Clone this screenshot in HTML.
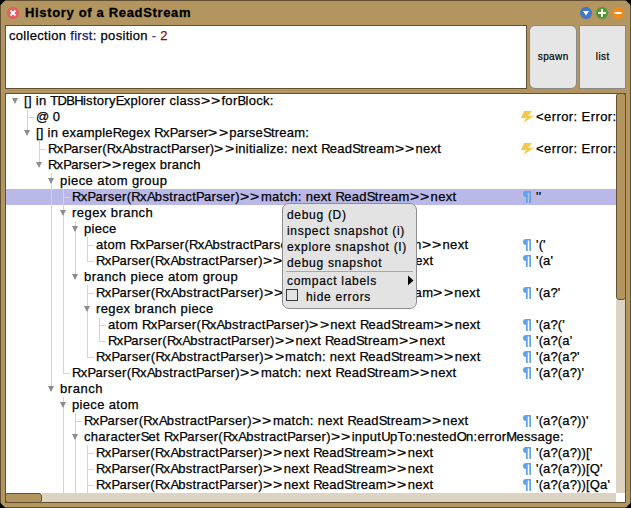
<!DOCTYPE html><html><head><meta charset="utf-8"><style>
*{margin:0;padding:0;box-sizing:border-box}
html,body{width:631px;height:508px;overflow:hidden;background:#000}
body{position:relative;font-family:"Liberation Sans",sans-serif}
.a{position:absolute}
.win{left:0;top:0;width:631px;height:508px;background:#b3955f;border:1px solid #634f31}
.title{left:25px;top:4px;font:bold 13px/18px "Liberation Sans",sans-serif;letter-spacing:0.66px;-webkit-text-stroke:0.3px;color:#000;white-space:pre}
.pane{background:#fff;border:1px solid #634f31}
.btn{background:#e6e6e6;border:1px solid #888}
.btxt{font:10.5px/16px "Liberation Sans",sans-serif;letter-spacing:0.1px;color:#000;text-align:center;width:100%;white-space:pre}
.row{position:absolute;left:0;height:16px;font:13px/16px "Liberation Sans",sans-serif;letter-spacing:0.27px;-webkit-text-stroke:0.25px;white-space:pre;color:#000}
.menu{left:282px;top:203px;width:135px;height:106px;background:#e3e3e3;border:1px solid #8e8e8e;border-radius:7px}
.mi{position:absolute;left:4px;font:12px/16px "Liberation Sans",sans-serif;letter-spacing:0.7px;-webkit-text-stroke:0.2px;white-space:pre;color:#000}
</style></head><body>

<div class="a win"></div>
<svg class="a" style="left:0;top:0" width="631" height="30">
<circle cx="13" cy="13" r="6" fill="#e85b5e"/>
<path d="M10.5 10.5l5 5M15.5 10.5l-5 5" stroke="#fff" stroke-width="1.8"/>
<circle cx="586" cy="13" r="6" fill="#3f78c5"/>
<polygon points="583,11 589,11 586,15.5" fill="#fff"/>
<circle cx="602" cy="13" r="6" fill="#4e9a32"/>
<path d="M598 13h8M602 9v8" stroke="#fff" stroke-width="2"/>
<circle cx="618" cy="13" r="6" fill="#ef8a1a"/>
<path d="M614.5 13h7" stroke="#fff" stroke-width="2"/>
</svg>
<div class="a title">History of a ReadStream</div>
<div class="a pane" style="left:5px;top:25px;width:522px;height:64px"></div>
<div class="a" style="left:9px;top:28px;font:13px/16px 'Liberation Sans',sans-serif;letter-spacing:0.31px;-webkit-text-stroke:0.25px;white-space:pre">collection <span style="color:#10106e">first:</span> position <span style="color:#5a3ab0">-</span> <span style="color:#850c0c">2</span></div>
<div class="a btn" style="left:529px;top:25px;width:48px;height:64px;border-radius:6px"><div class="a btxt" style="top:47px;left:0;top:49px"></div></div>
<div class="a" style="left:529px;top:49px;width:48px;font:10px/16px 'Liberation Sans',sans-serif;letter-spacing:0.4px;text-indent:0.4px;-webkit-text-stroke:0.2px;text-align:center;white-space:pre">spawn</div>
<div class="a btn" style="left:579px;top:25px;width:47px;height:64px"></div>
<div class="a" style="left:579px;top:49px;width:47px;font:10px/16px 'Liberation Sans',sans-serif;letter-spacing:0.4px;text-indent:0.4px;-webkit-text-stroke:0.2px;text-align:center;white-space:pre">list</div>
<div class="a pane" style="left:5px;top:93px;width:621px;height:410px;overflow:hidden">
<div class="a" style="left:-6px;top:-94px;width:631px;height:508px">
<div class="a" style="left:6px;top:189px;width:620px;height:16px;background:#b9b8e6"></div>
<svg class="a" style="left:0;top:0" width="631" height="508"><rect x="27" y="109" width="1" height="24" fill="#d4d4d4"/><rect x="39" y="141" width="1" height="24" fill="#d4d4d4"/><rect x="51" y="173" width="1" height="216" fill="#d4d4d4"/><rect x="63" y="189" width="1" height="184" fill="#d4d4d4"/><rect x="75" y="221" width="1" height="56" fill="#d4d4d4"/><rect x="87" y="237" width="1" height="24" fill="#d4d4d4"/><rect x="87" y="285" width="1" height="72" fill="#d4d4d4"/><rect x="99" y="317" width="1" height="24" fill="#d4d4d4"/><rect x="63" y="397" width="1" height="96" fill="#d4d4d4"/><rect x="75" y="413" width="1" height="80" fill="#d4d4d4"/><rect x="87" y="445" width="1" height="48" fill="#d4d4d4"/><polygon points="12,98 18,98 15,104" fill="#8c8c8c"/><rect x="27" y="117" width="7" height="1" fill="#d4d4d4"/><polygon points="24,130 30,130 27,136" fill="#8c8c8c"/><rect x="39" y="149" width="7" height="1" fill="#d4d4d4"/><polygon points="36,162 42,162 39,168" fill="#8c8c8c"/><polygon points="48,178 54,178 51,184" fill="#8c8c8c"/><rect x="63" y="197" width="7" height="1" fill="#d4d4d4"/><polygon points="60,210 66,210 63,216" fill="#8c8c8c"/><polygon points="72,226 78,226 75,232" fill="#8c8c8c"/><rect x="87" y="245" width="7" height="1" fill="#d4d4d4"/><rect x="87" y="261" width="7" height="1" fill="#d4d4d4"/><polygon points="72,274 78,274 75,280" fill="#8c8c8c"/><rect x="87" y="293" width="7" height="1" fill="#d4d4d4"/><polygon points="84,306 90,306 87,312" fill="#8c8c8c"/><rect x="99" y="325" width="7" height="1" fill="#d4d4d4"/><rect x="99" y="341" width="7" height="1" fill="#d4d4d4"/><rect x="87" y="357" width="7" height="1" fill="#d4d4d4"/><rect x="63" y="373" width="7" height="1" fill="#d4d4d4"/><polygon points="48,386 54,386 51,392" fill="#8c8c8c"/><polygon points="60,402 66,402 63,408" fill="#8c8c8c"/><rect x="75" y="421" width="7" height="1" fill="#d4d4d4"/><polygon points="72,434 78,434 75,440" fill="#8c8c8c"/><rect x="87" y="453" width="7" height="1" fill="#d4d4d4"/><rect x="87" y="469" width="7" height="1" fill="#d4d4d4"/><rect x="87" y="485" width="7" height="1" fill="#d4d4d4"/><polygon points="524,111 532,111 528,116 533.5,116 523.5,123 526,118 521,118" fill="#f2c94a"/><polygon points="524,143 532,143 528,148 533.5,148 523.5,155 526,150 521,150" fill="#f2c94a"/><path d="M526 191h5v12h-1.7v-10.6h-1.6v10.6h-1.7v-6a3 3 0 0 1 0-6z" fill="#5fa3e8"/><path d="M526 239h5v12h-1.7v-10.6h-1.6v10.6h-1.7v-6a3 3 0 0 1 0-6z" fill="#5fa3e8"/><path d="M526 255h5v12h-1.7v-10.6h-1.6v10.6h-1.7v-6a3 3 0 0 1 0-6z" fill="#5fa3e8"/><path d="M526 287h5v12h-1.7v-10.6h-1.6v10.6h-1.7v-6a3 3 0 0 1 0-6z" fill="#5fa3e8"/><path d="M526 319h5v12h-1.7v-10.6h-1.6v10.6h-1.7v-6a3 3 0 0 1 0-6z" fill="#5fa3e8"/><path d="M526 335h5v12h-1.7v-10.6h-1.6v10.6h-1.7v-6a3 3 0 0 1 0-6z" fill="#5fa3e8"/><path d="M526 351h5v12h-1.7v-10.6h-1.6v10.6h-1.7v-6a3 3 0 0 1 0-6z" fill="#5fa3e8"/><path d="M526 367h5v12h-1.7v-10.6h-1.6v10.6h-1.7v-6a3 3 0 0 1 0-6z" fill="#5fa3e8"/><path d="M526 415h5v12h-1.7v-10.6h-1.6v10.6h-1.7v-6a3 3 0 0 1 0-6z" fill="#5fa3e8"/><path d="M526 447h5v12h-1.7v-10.6h-1.6v10.6h-1.7v-6a3 3 0 0 1 0-6z" fill="#5fa3e8"/><path d="M526 463h5v12h-1.7v-10.6h-1.6v10.6h-1.7v-6a3 3 0 0 1 0-6z" fill="#5fa3e8"/><path d="M526 479h5v12h-1.7v-10.6h-1.6v10.6h-1.7v-6a3 3 0 0 1 0-6z" fill="#5fa3e8"/></svg>
<div class="row" style="left:24px;top:93px;letter-spacing:0.294px">[] in <span style="letter-spacing:-0.706px">TDBH</span>istory<span style="letter-spacing:-0.706px">E</span>xplorer class<span style="display:inline-block;width:10.484px;letter-spacing:0;transform:scaleX(1.22);transform-origin:0 0">&gt;</span><span style="display:inline-block;width:10.484px;letter-spacing:0;transform:scaleX(1.22);transform-origin:0 0">&gt;</span>for<span style="letter-spacing:-0.706px">B</span>lock:</div>
<div class="row" style="left:36px;top:109px;letter-spacing:-0.073px">@ 0</div>
<div class="row" style="left:536px;top:109px;letter-spacing:0.42px">&lt;error: Error: Instances of ReadStream are not indexable</div>
<div class="row" style="left:36px;top:125px;letter-spacing:0.234px">[] in example<span style="letter-spacing:-0.766px">R</span>egex <span style="letter-spacing:-0.766px">R</span>x<span style="letter-spacing:-0.766px">P</span>arser<span style="display:inline-block;width:10.424px;letter-spacing:0;transform:scaleX(1.22);transform-origin:0 0">&gt;</span><span style="display:inline-block;width:10.424px;letter-spacing:0;transform:scaleX(1.22);transform-origin:0 0">&gt;</span>parse<span style="letter-spacing:-0.766px">S</span>tream:</div>
<div class="row" style="left:48px;top:141px;letter-spacing:0.251px"><span style="letter-spacing:-0.749px">R</span>x<span style="letter-spacing:-0.749px">P</span>arser(<span style="letter-spacing:-0.749px">R</span>x<span style="letter-spacing:-0.749px">A</span>bstract<span style="letter-spacing:-0.749px">P</span>arser)<span style="display:inline-block;width:10.441px;letter-spacing:0;transform:scaleX(1.22);transform-origin:0 0">&gt;</span><span style="display:inline-block;width:10.441px;letter-spacing:0;transform:scaleX(1.22);transform-origin:0 0">&gt;</span>initialize: next <span style="letter-spacing:-0.749px">R</span>ead<span style="letter-spacing:-0.749px">S</span>tream<span style="display:inline-block;width:10.441px;letter-spacing:0;transform:scaleX(1.22);transform-origin:0 0">&gt;</span><span style="display:inline-block;width:10.441px;letter-spacing:0;transform:scaleX(1.22);transform-origin:0 0">&gt;</span>next</div>
<div class="row" style="left:536px;top:141px;letter-spacing:0.42px">&lt;error: Error: Instances of ReadStream are not indexable</div>
<div class="row" style="left:48px;top:157px;letter-spacing:0.192px"><span style="letter-spacing:-0.808px">R</span>x<span style="letter-spacing:-0.808px">P</span>arser<span style="display:inline-block;width:10.382px;letter-spacing:0;transform:scaleX(1.22);transform-origin:0 0">&gt;</span><span style="display:inline-block;width:10.382px;letter-spacing:0;transform:scaleX(1.22);transform-origin:0 0">&gt;</span>regex branch</div>
<div class="row" style="left:60px;top:173px;letter-spacing:0.43px">piece atom group</div>
<div class="row" style="left:72px;top:189px;letter-spacing:0.313px"><span style="letter-spacing:-0.687px">R</span>x<span style="letter-spacing:-0.687px">P</span>arser(<span style="letter-spacing:-0.687px">R</span>x<span style="letter-spacing:-0.687px">A</span>bstract<span style="letter-spacing:-0.687px">P</span>arser)<span style="display:inline-block;width:10.503px;letter-spacing:0;transform:scaleX(1.22);transform-origin:0 0">&gt;</span><span style="display:inline-block;width:10.503px;letter-spacing:0;transform:scaleX(1.22);transform-origin:0 0">&gt;</span>match: next <span style="letter-spacing:-0.687px">R</span>ead<span style="letter-spacing:-0.687px">S</span>tream<span style="display:inline-block;width:10.503px;letter-spacing:0;transform:scaleX(1.22);transform-origin:0 0">&gt;</span><span style="display:inline-block;width:10.503px;letter-spacing:0;transform:scaleX(1.22);transform-origin:0 0">&gt;</span>next</div>
<div class="row" style="left:536px;top:189px;letter-spacing:0.15px">&#x27;&#x27;</div>
<div class="row" style="left:72px;top:205px;letter-spacing:0.446px">regex branch</div>
<div class="row" style="left:84px;top:221px;letter-spacing:0.28px">piece</div>
<div class="row" style="left:96px;top:237px;letter-spacing:0.287px">atom <span style="letter-spacing:-0.713px">R</span>x<span style="letter-spacing:-0.713px">P</span>arser(<span style="letter-spacing:-0.713px">R</span>x<span style="letter-spacing:-0.713px">A</span>bstract<span style="letter-spacing:-0.713px">P</span>arser)<span style="display:inline-block;width:10.477px;letter-spacing:0;transform:scaleX(1.22);transform-origin:0 0">&gt;</span><span style="display:inline-block;width:10.477px;letter-spacing:0;transform:scaleX(1.22);transform-origin:0 0">&gt;</span>next <span style="letter-spacing:-0.713px">R</span>ead<span style="letter-spacing:-0.713px">S</span>tream<span style="display:inline-block;width:10.477px;letter-spacing:0;transform:scaleX(1.22);transform-origin:0 0">&gt;</span><span style="display:inline-block;width:10.477px;letter-spacing:0;transform:scaleX(1.22);transform-origin:0 0">&gt;</span>next</div>
<div class="row" style="left:536px;top:237px;letter-spacing:0.15px">&#x27;(&#x27;</div>
<div class="row" style="left:96px;top:253px;letter-spacing:0.267px"><span style="letter-spacing:-0.733px">R</span>x<span style="letter-spacing:-0.733px">P</span>arser(<span style="letter-spacing:-0.733px">R</span>x<span style="letter-spacing:-0.733px">A</span>bstract<span style="letter-spacing:-0.733px">P</span>arser)<span style="display:inline-block;width:10.457px;letter-spacing:0;transform:scaleX(1.22);transform-origin:0 0">&gt;</span><span style="display:inline-block;width:10.457px;letter-spacing:0;transform:scaleX(1.22);transform-origin:0 0">&gt;</span>next <span style="letter-spacing:-0.733px">R</span>ead<span style="letter-spacing:-0.733px">S</span>tream<span style="display:inline-block;width:10.457px;letter-spacing:0;transform:scaleX(1.22);transform-origin:0 0">&gt;</span><span style="display:inline-block;width:10.457px;letter-spacing:0;transform:scaleX(1.22);transform-origin:0 0">&gt;</span>next</div>
<div class="row" style="left:536px;top:253px;letter-spacing:0.15px">&#x27;(a&#x27;</div>
<div class="row" style="left:84px;top:269px;letter-spacing:0.449px">branch piece atom group</div>
<div class="row" style="left:96px;top:285px;letter-spacing:0.307px"><span style="letter-spacing:-0.693px">R</span>x<span style="letter-spacing:-0.693px">P</span>arser(<span style="letter-spacing:-0.693px">R</span>x<span style="letter-spacing:-0.693px">A</span>bstract<span style="letter-spacing:-0.693px">P</span>arser)<span style="display:inline-block;width:10.497px;letter-spacing:0;transform:scaleX(1.22);transform-origin:0 0">&gt;</span><span style="display:inline-block;width:10.497px;letter-spacing:0;transform:scaleX(1.22);transform-origin:0 0">&gt;</span>match: next <span style="letter-spacing:-0.693px">R</span>ead<span style="letter-spacing:-0.693px">S</span>tream<span style="display:inline-block;width:10.497px;letter-spacing:0;transform:scaleX(1.22);transform-origin:0 0">&gt;</span><span style="display:inline-block;width:10.497px;letter-spacing:0;transform:scaleX(1.22);transform-origin:0 0">&gt;</span>next</div>
<div class="row" style="left:536px;top:285px;letter-spacing:0.15px">&#x27;(a?&#x27;</div>
<div class="row" style="left:96px;top:301px;letter-spacing:0.39px">regex branch piece</div>
<div class="row" style="left:108px;top:317px;letter-spacing:0.291px">atom <span style="letter-spacing:-0.709px">R</span>x<span style="letter-spacing:-0.709px">P</span>arser(<span style="letter-spacing:-0.709px">R</span>x<span style="letter-spacing:-0.709px">A</span>bstract<span style="letter-spacing:-0.709px">P</span>arser)<span style="display:inline-block;width:10.481px;letter-spacing:0;transform:scaleX(1.22);transform-origin:0 0">&gt;</span><span style="display:inline-block;width:10.481px;letter-spacing:0;transform:scaleX(1.22);transform-origin:0 0">&gt;</span>next <span style="letter-spacing:-0.709px">R</span>ead<span style="letter-spacing:-0.709px">S</span>tream<span style="display:inline-block;width:10.481px;letter-spacing:0;transform:scaleX(1.22);transform-origin:0 0">&gt;</span><span style="display:inline-block;width:10.481px;letter-spacing:0;transform:scaleX(1.22);transform-origin:0 0">&gt;</span>next</div>
<div class="row" style="left:536px;top:317px;letter-spacing:0.15px">&#x27;(a?(&#x27;</div>
<div class="row" style="left:108px;top:333px;letter-spacing:0.263px"><span style="letter-spacing:-0.737px">R</span>x<span style="letter-spacing:-0.737px">P</span>arser(<span style="letter-spacing:-0.737px">R</span>x<span style="letter-spacing:-0.737px">A</span>bstract<span style="letter-spacing:-0.737px">P</span>arser)<span style="display:inline-block;width:10.453px;letter-spacing:0;transform:scaleX(1.22);transform-origin:0 0">&gt;</span><span style="display:inline-block;width:10.453px;letter-spacing:0;transform:scaleX(1.22);transform-origin:0 0">&gt;</span>next <span style="letter-spacing:-0.737px">R</span>ead<span style="letter-spacing:-0.737px">S</span>tream<span style="display:inline-block;width:10.453px;letter-spacing:0;transform:scaleX(1.22);transform-origin:0 0">&gt;</span><span style="display:inline-block;width:10.453px;letter-spacing:0;transform:scaleX(1.22);transform-origin:0 0">&gt;</span>next</div>
<div class="row" style="left:536px;top:333px;letter-spacing:0.15px">&#x27;(a?(a&#x27;</div>
<div class="row" style="left:96px;top:349px;letter-spacing:0.315px"><span style="letter-spacing:-0.685px">R</span>x<span style="letter-spacing:-0.685px">P</span>arser(<span style="letter-spacing:-0.685px">R</span>x<span style="letter-spacing:-0.685px">A</span>bstract<span style="letter-spacing:-0.685px">P</span>arser)<span style="display:inline-block;width:10.505px;letter-spacing:0;transform:scaleX(1.22);transform-origin:0 0">&gt;</span><span style="display:inline-block;width:10.505px;letter-spacing:0;transform:scaleX(1.22);transform-origin:0 0">&gt;</span>match: next <span style="letter-spacing:-0.685px">R</span>ead<span style="letter-spacing:-0.685px">S</span>tream<span style="display:inline-block;width:10.505px;letter-spacing:0;transform:scaleX(1.22);transform-origin:0 0">&gt;</span><span style="display:inline-block;width:10.505px;letter-spacing:0;transform:scaleX(1.22);transform-origin:0 0">&gt;</span>next</div>
<div class="row" style="left:536px;top:349px;letter-spacing:0.15px">&#x27;(a?(a?&#x27;</div>
<div class="row" style="left:72px;top:365px;letter-spacing:0.313px"><span style="letter-spacing:-0.687px">R</span>x<span style="letter-spacing:-0.687px">P</span>arser(<span style="letter-spacing:-0.687px">R</span>x<span style="letter-spacing:-0.687px">A</span>bstract<span style="letter-spacing:-0.687px">P</span>arser)<span style="display:inline-block;width:10.503px;letter-spacing:0;transform:scaleX(1.22);transform-origin:0 0">&gt;</span><span style="display:inline-block;width:10.503px;letter-spacing:0;transform:scaleX(1.22);transform-origin:0 0">&gt;</span>match: next <span style="letter-spacing:-0.687px">R</span>ead<span style="letter-spacing:-0.687px">S</span>tream<span style="display:inline-block;width:10.503px;letter-spacing:0;transform:scaleX(1.22);transform-origin:0 0">&gt;</span><span style="display:inline-block;width:10.503px;letter-spacing:0;transform:scaleX(1.22);transform-origin:0 0">&gt;</span>next</div>
<div class="row" style="left:536px;top:365px;letter-spacing:0.15px">&#x27;(a?(a?)&#x27;</div>
<div class="row" style="left:60px;top:381px;letter-spacing:0.57px">branch</div>
<div class="row" style="left:72px;top:397px;letter-spacing:0.334px">piece atom</div>
<div class="row" style="left:84px;top:413px;letter-spacing:0.313px"><span style="letter-spacing:-0.687px">R</span>x<span style="letter-spacing:-0.687px">P</span>arser(<span style="letter-spacing:-0.687px">R</span>x<span style="letter-spacing:-0.687px">A</span>bstract<span style="letter-spacing:-0.687px">P</span>arser)<span style="display:inline-block;width:10.503px;letter-spacing:0;transform:scaleX(1.22);transform-origin:0 0">&gt;</span><span style="display:inline-block;width:10.503px;letter-spacing:0;transform:scaleX(1.22);transform-origin:0 0">&gt;</span>match: next <span style="letter-spacing:-0.687px">R</span>ead<span style="letter-spacing:-0.687px">S</span>tream<span style="display:inline-block;width:10.503px;letter-spacing:0;transform:scaleX(1.22);transform-origin:0 0">&gt;</span><span style="display:inline-block;width:10.503px;letter-spacing:0;transform:scaleX(1.22);transform-origin:0 0">&gt;</span>next</div>
<div class="row" style="left:536px;top:413px;letter-spacing:0.15px">&#x27;(a?(a?))&#x27;</div>
<div class="row" style="left:84px;top:429px;letter-spacing:0.273px">character<span style="letter-spacing:-0.727px">S</span>et <span style="letter-spacing:-0.727px">R</span>x<span style="letter-spacing:-0.727px">P</span>arser(<span style="letter-spacing:-0.727px">R</span>x<span style="letter-spacing:-0.727px">A</span>bstract<span style="letter-spacing:-0.727px">P</span>arser)<span style="display:inline-block;width:10.463px;letter-spacing:0;transform:scaleX(1.22);transform-origin:0 0">&gt;</span><span style="display:inline-block;width:10.463px;letter-spacing:0;transform:scaleX(1.22);transform-origin:0 0">&gt;</span>input<span style="letter-spacing:-0.727px">U</span>p<span style="letter-spacing:-0.727px">T</span>o:nested<span style="letter-spacing:-0.727px">O</span>n:error<span style="letter-spacing:-0.727px">M</span>essage:</div>
<div class="row" style="left:96px;top:445px;letter-spacing:0.267px"><span style="letter-spacing:-0.733px">R</span>x<span style="letter-spacing:-0.733px">P</span>arser(<span style="letter-spacing:-0.733px">R</span>x<span style="letter-spacing:-0.733px">A</span>bstract<span style="letter-spacing:-0.733px">P</span>arser)<span style="display:inline-block;width:10.457px;letter-spacing:0;transform:scaleX(1.22);transform-origin:0 0">&gt;</span><span style="display:inline-block;width:10.457px;letter-spacing:0;transform:scaleX(1.22);transform-origin:0 0">&gt;</span>next <span style="letter-spacing:-0.733px">R</span>ead<span style="letter-spacing:-0.733px">S</span>tream<span style="display:inline-block;width:10.457px;letter-spacing:0;transform:scaleX(1.22);transform-origin:0 0">&gt;</span><span style="display:inline-block;width:10.457px;letter-spacing:0;transform:scaleX(1.22);transform-origin:0 0">&gt;</span>next</div>
<div class="row" style="left:536px;top:445px;letter-spacing:0.15px">&#x27;(a?(a?))[&#x27;</div>
<div class="row" style="left:96px;top:461px;letter-spacing:0.267px"><span style="letter-spacing:-0.733px">R</span>x<span style="letter-spacing:-0.733px">P</span>arser(<span style="letter-spacing:-0.733px">R</span>x<span style="letter-spacing:-0.733px">A</span>bstract<span style="letter-spacing:-0.733px">P</span>arser)<span style="display:inline-block;width:10.457px;letter-spacing:0;transform:scaleX(1.22);transform-origin:0 0">&gt;</span><span style="display:inline-block;width:10.457px;letter-spacing:0;transform:scaleX(1.22);transform-origin:0 0">&gt;</span>next <span style="letter-spacing:-0.733px">R</span>ead<span style="letter-spacing:-0.733px">S</span>tream<span style="display:inline-block;width:10.457px;letter-spacing:0;transform:scaleX(1.22);transform-origin:0 0">&gt;</span><span style="display:inline-block;width:10.457px;letter-spacing:0;transform:scaleX(1.22);transform-origin:0 0">&gt;</span>next</div>
<div class="row" style="left:536px;top:461px;letter-spacing:0.15px">&#x27;(a?(a?))[Q&#x27;</div>
<div class="row" style="left:96px;top:477px;letter-spacing:0.267px"><span style="letter-spacing:-0.733px">R</span>x<span style="letter-spacing:-0.733px">P</span>arser(<span style="letter-spacing:-0.733px">R</span>x<span style="letter-spacing:-0.733px">A</span>bstract<span style="letter-spacing:-0.733px">P</span>arser)<span style="display:inline-block;width:10.457px;letter-spacing:0;transform:scaleX(1.22);transform-origin:0 0">&gt;</span><span style="display:inline-block;width:10.457px;letter-spacing:0;transform:scaleX(1.22);transform-origin:0 0">&gt;</span>next <span style="letter-spacing:-0.733px">R</span>ead<span style="letter-spacing:-0.733px">S</span>tream<span style="display:inline-block;width:10.457px;letter-spacing:0;transform:scaleX(1.22);transform-origin:0 0">&gt;</span><span style="display:inline-block;width:10.457px;letter-spacing:0;transform:scaleX(1.22);transform-origin:0 0">&gt;</span>next</div>
<div class="row" style="left:536px;top:477px;letter-spacing:0.15px">&#x27;(a?(a?))[Qa&#x27;</div>
</div></div>
<div class="a" style="left:616px;top:300px;width:9px;height:193px;background:#ddd3c2"></div>
<div class="a" style="left:616px;top:93px;width:10px;height:207px;background:#b3955f;border:1px solid #634f31;border-radius:3px"></div>
<div class="a" style="left:42px;top:493px;width:574px;height:9px;background:#ddd3c2"></div>
<div class="a" style="left:5px;top:493px;width:37px;height:10px;background:#b3955f;border:1px solid #634f31;border-radius:3px"></div>
<div class="a" style="left:616px;top:493px;width:9px;height:9px;background:#fff"></div>
<div class="a menu">
<div class="mi" style="top:2.5px">debug (D)</div>
<div class="mi" style="top:18.5px">inspect snapshot (i)</div>
<div class="mi" style="top:34.5px">explore snapshot (I)</div>
<div class="mi" style="top:50.5px">debug snapshot</div>
<div class="a" style="left:3px;top:67px;width:127px;height:1px;background:#a9a9a9"></div>
<div class="mi" style="top:69px">compact labels</div>
<svg class="a" style="left:124px;top:71px" width="8" height="12"><polygon points="1,0.6 6.5,5.4 1,10.2" fill="#000"/></svg>
<div class="a" style="left:3px;top:85px;width:12px;height:12px;background:transparent;border:1px solid #3a3a3a"></div>
<div class="mi" style="left:23px;top:85px">hide errors</div>
</div>
<svg class="a" style="left:0;top:0" width="631" height="508"><polygon points="0,0 5.5,0 0,5.5" fill="#000"/><polygon points="631,0 625.5,0 631,5.5" fill="#000"/><polygon points="0,508 5.5,508 0,502.5" fill="#000"/><polygon points="631,508 625.5,508 631,502.5" fill="#000"/></svg>
</body></html>
